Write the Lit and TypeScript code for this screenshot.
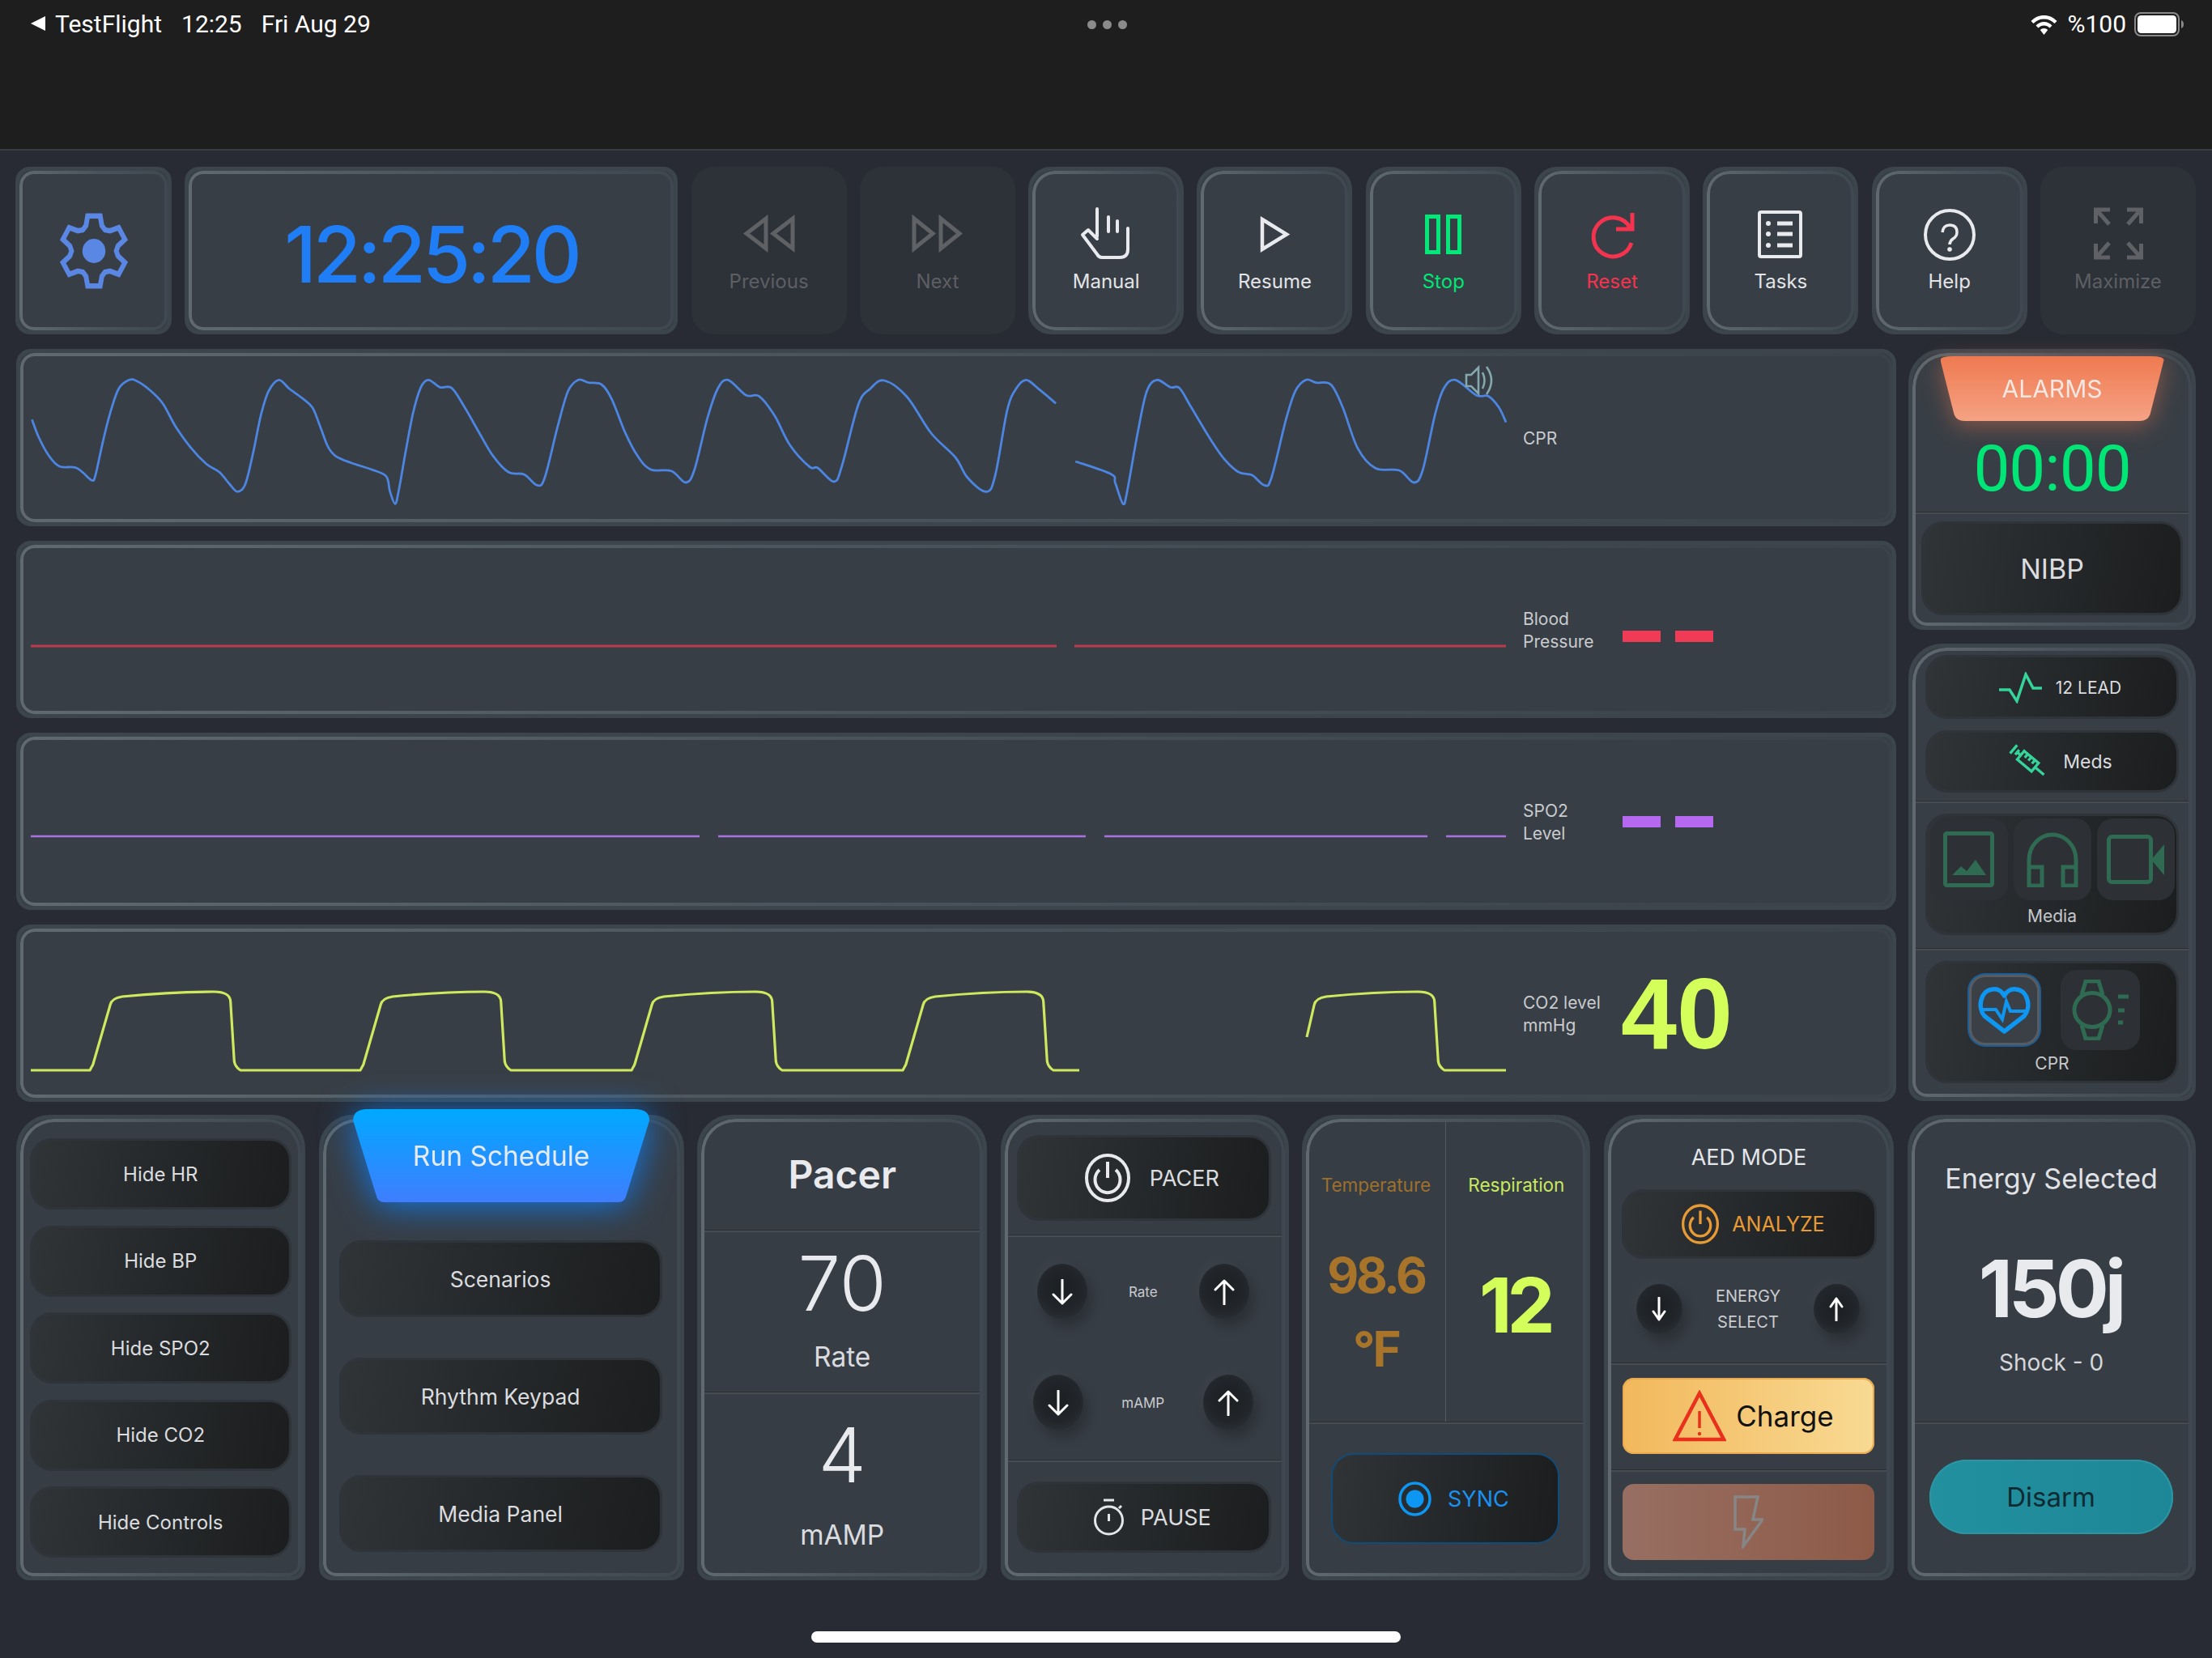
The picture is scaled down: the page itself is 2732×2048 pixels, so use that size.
import { LitElement, html, css, svg } from "lit";
import { customElement } from "lit/decorators.js";

type P = [number, number];

function smooth(pts: P[]): string {
  let d = `M${pts[0][0].toFixed(1)} ${pts[0][1].toFixed(1)}`;
  for (let i = 0; i < pts.length - 1; i++) {
    const p0 = pts[Math.max(0, i - 1)];
    const p1 = pts[i];
    const p2 = pts[i + 1];
    const p3 = pts[Math.min(pts.length - 1, i + 2)];
    const c1: P = [p1[0] + (p2[0] - p0[0]) / 6, p1[1] + (p2[1] - p0[1]) / 6];
    const c2: P = [p2[0] - (p3[0] - p1[0]) / 6, p2[1] - (p3[1] - p1[1]) / 6];
    d += ` C${c1[0].toFixed(1)} ${c1[1].toFixed(1)} ${c2[0].toFixed(1)} ${c2[1].toFixed(1)} ${p2[0].toFixed(1)} ${p2[1].toFixed(1)}`;
  }
  return d;
}

const zy = (v: number) => 420 + v / 3;
const seg1a: number[][] = [[62,295],[75,360],[95,430],[115,468],[145,472],[160,490],[178,520],[185,500],[200,370],[215,260],[230,180],[250,148],[265,152],[290,185],[315,235],[340,320],[370,400],[400,460],[425,490],[445,535],[460,562],[475,535],[490,420],[505,280],[520,190],[540,148],[560,180],[585,215],[605,250],[620,320],[635,395],[650,430],[680,455],[720,480],[748,505],[755,560],[765,607],[772,560],[785,420],[800,270],[815,175],[830,148],[852,175],[875,178],[900,250],[930,350],[955,430],[985,490],[1015,498],[1040,538],[1055,510],[1080,320],[1100,190],[1120,148],[1140,158],[1165,165],[1185,220],[1210,340],[1235,430],[1260,480],[1300,485],[1328,528],[1345,480],[1370,290],[1390,180],[1410,148],[1445,205],[1470,208],[1500,280],[1530,390],[1568,470]];
const seg1mid: P[] = [[1010,578],[1030,595],[1040,575],[1060,500],[1075,480],[1092,470],[1120,490],[1150,535],[1180,565],[1195,590]];
const seg1b: number[][] = [[25,562],[40,500],[60,260],[75,180],[92,148],[115,185],[142,235]];
const seg2: number[][] = [[175,450],[235,497],[242,530],[255,607],[262,560],[280,340],[295,190],[312,148],[335,175],[350,178],[370,250],[400,360],[425,440],[450,490],[472,500],[493,538],[505,510],[530,290],[545,190],[563,148],[580,158],[605,165],[625,250],[650,400],[680,475],[720,483],[745,528],[760,480],[780,280],[795,180],[815,148],[850,205],[870,208],[888,250],[900,305]];
const pulseA: P[] = [
  ...seg1a.map((p) => [p[0] / 1.568, zy(p[1])] as P),
  ...seg1mid,
  ...seg1b.map((p) => [1200 + p[0] / 1.3635, zy(p[1])] as P),
];
const pulseB: P[] = seg2.map((p) => [1200 + p[0] / 1.3635, zy(p[1])] as P);

const co2Beat = (x: number) =>
  `L${x} 1321 L${x + 3.8} 1314 L${x + 25.2} 1240 Q${x + 27} 1232 ${x + 40} 1230 Q${x + 100} 1224 ${x + 153} 1224 Q${x + 173} 1224 ${x + 173.7} 1236 L${x + 178.3} 1310 Q${x + 179.5} 1317 ${x + 186} 1321`;
const co2A = `M38 1321 ${co2Beat(111)} ${co2Beat(445)} ${co2Beat(780)} ${co2Beat(1115)} H1333`;
const co2B = `M1614 1280 L1623.2 1240 Q1625 1232 1638 1230 Q1698 1224 1751 1224 Q1771 1224 1771.7 1236 L1776.3 1310 Q1777.5 1317 1784 1321 H1860`;

function gearPath(cx: number, cy: number): string {
  const pt = (r: number, deg: number) => {
    const a = (deg * Math.PI) / 180;
    return `${(cx + r * Math.cos(a)).toFixed(1)} ${(cy + r * Math.sin(a)).toFixed(1)}`;
  };
  const out: string[] = [];
  for (let i = 0; i < 6; i++) {
    const a = i * 60 - 90;
    out.push(pt(33, a - 19), pt(44, a - 11), pt(44, a + 11), pt(33, a + 19), pt(30, a + 30));
  }
  return "M" + out.join(" L") + " Z";
}

const chart = (y0: number, body: unknown) => html`<svg class="trace" viewBox="25 ${y0} 1845 209">${body}</svg>`;

const arrowDown = html`<svg class="arr" viewBox="0 0 26 32"><path d="M13 1V30M2 19L13 30L24 19"/></svg>`;
const arrowUp = html`<svg class="arr" viewBox="0 0 26 32"><path d="M13 31V2M2 13L13 2L24 13"/></svg>`;
const arrowDownS = html`<svg class="arr small" viewBox="0 0 18 30"><path d="M9 1V28M2 18L9 28L16 18"/></svg>`;
const arrowUpS = html`<svg class="arr small" viewBox="0 0 18 30"><path d="M9 29V2M2 12L9 2L16 12"/></svg>`;

const ico = (body: unknown) => html`<svg class="ti" viewBox="0 0 70 70">${body}</svg>`;

const icons = {
  prev: ico(svg`<path class="s5" d="M7 32.5L31 14V51ZM40 32.5L64 14V51Z"/>`),
  next: ico(svg`<path class="s5" d="M29 32.5L6 14V51ZM62 32.5L39 14V51Z"/>`),
  manual: ico(svg`<path class="s4r" d="M24 2V36M38 12V30M49 17V30M62 26V52Q62 62 52 62H30Q26 62 24 58L6 34L13 28L24 39"/>`),
  resume: ico(svg`<path class="s45" d="M20 15L50 33.5L20 52Z"/>`),
  stop: ico(svg`<path class="s5" d="M14.5 11.5h14v44h-14zM40.5 11.5h14v44h-14z"/>`),
  reset: ico(svg`<path class="s5" d="M57 25A24 24 0 1 0 59 44M60 7V27H40"/>`),
  tasks: ico(svg`<rect class="s4" x="9" y="6" width="51" height="55" rx="2"/><g class="fillc"><circle cx="20" cy="20" r="3"/><circle cx="20" cy="33" r="3"/><circle cx="20" cy="47" r="3"/><rect x="31" y="17.5" width="19" height="5"/><rect x="31" y="30.5" width="19" height="5"/><rect x="31" y="44.5" width="19" height="5"/></g>`),
  help: ico(svg`<circle class="s4" cx="35" cy="34" r="30"/><path class="s35" d="M26 31Q27 22 35 22Q44 22 44 31Q44 36 39 39Q35 42 35 46"/><circle class="fillc" cx="35" cy="52" r="2.8"/>`),
  maximize: ico(svg`<path class="s5" d="M7.5 20V3H25M8 3L24 21M63.5 20V3H46M63 3L47 21M7.5 45V62H25M8 62L24 44M63.5 45V62H46M63 62L47 44"/>`),
};

const toolButtons = [
  { label: "Previous", icon: icons.prev, cls: "off" },
  { label: "Next", icon: icons.next, cls: "off" },
  { label: "Manual", icon: icons.manual, cls: "" },
  { label: "Resume", icon: icons.resume, cls: "" },
  { label: "Stop", icon: icons.stop, cls: "green" },
  { label: "Reset", icon: icons.reset, cls: "red" },
  { label: "Tasks", icon: icons.tasks, cls: "" },
  { label: "Help", icon: icons.help, cls: "" },
  { label: "Maximize", icon: icons.maximize, cls: "off" },
];

const power = (cls: string) => html`<svg class="power ${cls}" viewBox="0 0 56 60"><ellipse cx="28" cy="30" rx="26" ry="28"/><path d="M18 20A15.5 16 0 1 0 38 20M28 10V30"/></svg>`;

@customElement("app-root")
export class AppRoot extends LitElement {
  static styles = css`
    :host { display: block; width: 2732px; height: 2048px; background: #282b33; overflow: hidden; color: #e4e6e9; font-family: "Inter", "Noto Sans", sans-serif; }
    * { box-sizing: border-box; }
    svg { display: block; flex: none; fill: none; }

    .status { height: 186px; background: #1e1e1e; border-bottom: 2px solid #3b3e41; display: grid; grid-template-columns: 1fr auto 1fr; align-items: start; padding: 12px 35px 0 38px; font: 400 30px/36px "Roboto", sans-serif; color: #fff; }
    .status .l, .status .r { display: flex; align-items: flex-start; }
    .status .r { justify-content: flex-end; }
    .status .back { width: 18px; height: 18px; margin: 8px 12px 0 0; background: #fff; clip-path: polygon(0 50%, 100% 0, 100% 100%); }
    .status .t2 { margin-left: 24px; }
    .status .dots { display: flex; gap: 8px; margin-top: 13px; }
    .status .dots i { width: 11px; height: 11px; border-radius: 50%; background: #8b8b8b; }
    .status .wifi { width: 33px; height: 27px; margin: 5px 12px 0 0; }
    .status .batt { width: 61px; height: 30px; margin: 3px 0 0 10px; }

    .card { position: relative; border: 5px solid #3c454c; background: #383e45; border-radius: 18px; display: flex; flex-direction: column; }
    .card::before { content: ""; position: absolute; inset: 0; border-radius: inherit; border: 4px solid transparent; background: linear-gradient(90deg, #5f696f, #4a535b 55%, #3f4850) border-box; -webkit-mask: linear-gradient(#000 0 0) padding-box, linear-gradient(#000 0 0); -webkit-mask-composite: xor; mask-composite: exclude; pointer-events: none; }

    .toolbar { display: flex; gap: 16.3px; margin-top: 20px; padding-left: 19px; height: 207px; }
    .gear { width: 193px; align-items: center; justify-content: center; }
    .gear svg { width: 92px; height: 100px; }
    .gear path { stroke: #5a86e4; stroke-width: 6.5; }
    .gear ellipse { fill: #5a86e4; }
    .clock { width: 609px; align-items: center; justify-content: center; font: 500 96px/1 "Inter", sans-serif; letter-spacing: -4.2px; color: #1f7df5; padding-top: 8px; }
    .tool { width: 192px; border-radius: 28px; align-items: center; padding-top: 45px; font-size: 24px; line-height: 30px; color: #e2e4e7; }
    .tool .ti { width: 70px; height: 70px; margin-bottom: 7px; --c: #e8eaed; }
    .tool.off { border-color: transparent; background: #2d3138; background-clip: border-box; color: #5d5f63; }
    .tool.off::before { display: none; }
    .tool.off .ti { --c: #5f6164; }
    .tool.green { color: #00e676; } .tool.green .ti { --c: #00e878; }
    .tool.red { color: #f5334f; } .tool.red .ti { --c: #f5334f; }
    .s5, .s4, .s4r, .s45, .s35 { stroke: var(--c); fill: none; }
    .s5 { stroke-width: 5; } .s4 { stroke-width: 4; } .s45 { stroke-width: 4.5; } .s35 { stroke-width: 3.5; }
    .s4r { stroke-width: 4; stroke-linejoin: round; stroke-linecap: round; }
    .fillc { fill: var(--c); }

    .main { display: flex; gap: 15px; margin-top: 18px; padding-left: 20px; height: 929px; }
    .charts { width: 2322px; display: flex; flex-direction: column; gap: 18px; }
    .chart { height: 219px; flex-direction: row; align-items: center; }
    .chart::before { background: linear-gradient(90deg, #5f696f, #4a535b 45%, #3f474f 80%, #3b4249) border-box; }
    .chart .trace { width: 1845px; height: 209px; }
    .trace path { fill: none; }
    .pulse { stroke: #4c85e2; stroke-width: 2.8; stroke-linejoin: round; }
    .bp { stroke: #bb3a4e; stroke-width: 3; }
    .spo { stroke: #a872e0; stroke-width: 2.5; }
    .co2 { stroke: #cfe95f; stroke-width: 3.2; stroke-linejoin: round; }
    .spk { stroke: #84a8ad; stroke-width: 2.6; }
    .lab { width: 122px; margin: 2px 0 0 11px; font-size: 21px; line-height: 28px; color: #c9cbce; }
    .dashes { display: flex; gap: 18px; margin-left: 1px; }
    .dashes i { width: 47px; height: 14px; }
    .dashes.r { margin-top: 16px; } .dashes.r i { background: #f03a56; }
    .dashes.p i { background: #b668f0; }
    .big40 { margin-left: -1px; font: 700 124px/1 "Liberation Sans", sans-serif; color: #d4ff5a; }

    .side { width: 355px; display: flex; flex-direction: column; gap: 17px; }
    .alarmcard { height: 347px; border-radius: 42px 42px 18px 18px; align-items: stretch; }
    .alarms { align-self: center; margin-top: 4px; filter: drop-shadow(0 6px 14px rgba(240,120,80,.45)); }
    .alarms div { width: 276px; height: 80px; display: flex; align-items: center; justify-content: center; background: linear-gradient(#ef7a50, #f5a284); clip-path: path("M16 0H260Q276 0 276 5L259 72Q256 80 246 80H30Q20 80 17 72L0 5Q0 0 16 0Z"); font-size: 30px; color: #f4e6e0; }
    .timer { height: 112px; padding-top: 6px; display: flex; align-items: center; justify-content: center; font: 400 80px/1 "Roboto", sans-serif; color: #00e676; letter-spacing: -1px; }
    .divider { height: 3px; flex: none; border-top: 1px solid #2d2e32; background: #454c54; }
    .dark { display: flex; align-items: center; justify-content: center; background: linear-gradient(100deg, #303437, #1b1d1e); border-radius: 24px; box-shadow: 0 0 0 3px #2f343a; color: #dadcdf; }
    .nibp { margin: 12px 14px 0; height: 110px; font-size: 34px; }

    .modes { height: 565px; border-radius: 42px 42px 18px 18px; padding-top: 12px; }
    .lead, .meds { margin: 0 19px; gap: 17px; font-size: 21px; }
    .lead { height: 73px; padding: 2px 0 0 20px; }
    .meds { height: 71px; margin-top: 20px; gap: 20px; padding-left: 20px; font-size: 23px; }
    .g3 { stroke: #35d49a; stroke-width: 3.5; }
    .lead svg { width: 53px; height: 39px; } .meds svg { width: 48px; height: 50px; }
    .modes .divider { margin-top: 13px; }
    .panel { margin: 16px 19px 0; flex-direction: column; justify-content: flex-start; font-size: 21px; color: #c5c8cb; }
    .panel.media { height: 144px; padding-top: 3px; }
    .tiles { display: flex; gap: 7px; align-items: center; }
    .tile { width: 96px; height: 101px; border-radius: 20px; background: #2d3135; display: flex; align-items: center; justify-content: center; }
    .dim { stroke: #2f6b52; stroke-width: 5; }
    .dimf { fill: #2f6b52; }
    .panel.media .lbl { margin-top: 5px; line-height: 30px; }
    .modes .d2 { margin-top: 19px; }
    .panel.cpr { height: 145px; align-items: stretch; }
    .panel.cpr .tiles { gap: 26px; padding: 5px 0 0 51px; height: 109px; }
    .heart { width: 87px; height: 87px; border-radius: 20px; background: #3b4047; border: 3px solid #575c62; box-shadow: 0 0 0 2px #1b5d94; display: flex; align-items: center; justify-content: center; }
    .watch { width: 98px; height: 99px; }
    .panel.cpr .lbl { text-align: center; line-height: 26px; margin-top: 2px; }

    .bottom { display: flex; gap: 16.6px; margin-top: 17px; padding-left: 20px; height: 575px; }
    .bcard { width: 357px; height: 575px; border-radius: 42px 42px 16px 16px; background: #373d45; }
    .hide { padding: 27px 15px 0 14.5px; gap: 25.5px; }
    .hide .dark { height: 82px; font-size: 24px; }
    .sched { width: 451px; z-index: 2; }
    .run { align-self: center; margin-top: -12px; filter: drop-shadow(0 4px 22px rgba(10,132,255,.85)); }
    .run div { width: 366px; height: 115px; display: flex; align-items: center; justify-content: center; background: linear-gradient(#00a9ff, #3f7dff); clip-path: path("M18 0H348Q366 0 366 14L337 108Q335 115 328 115H38Q31 115 29 108L0 14Q0 0 18 0Z"); font-size: 33.5px; color: #e6ebf0; }
    .sched .list { display: flex; flex-direction: column; gap: 56px; margin: 50px 25px 0 23px; }
    .sched .dark { height: 89px; font-size: 26.5px; }

    .pacer { width: 358px; align-items: stretch; text-align: center; }
    .pacer h2 { margin: 0; height: 137px; display: flex; align-items: center; justify-content: center; font-size: 48px; font-weight: 600; color: #e8eaed; }
    .stat { display: flex; flex-direction: column; align-items: center; font-weight: 400; }
    .stat b { font-size: 94px; line-height: 90px; font-weight: 300; color: #e8eaed; }
    .stat span { font-size: 33.5px; line-height: 40px; color: #d9dbde; }
    .stat.a { height: 197px; padding-top: 18px; } .stat.a span { margin-top: 26px; }
    .stat.b { padding-top: 30px; } .stat.b span { margin-top: 34px; }

    .ctrl { width: 356px; }
    .ctrl .big { margin: 23px 20px 0 18px; height: 100px; font-size: 27px; gap: 24px; padding-left: 20px; }
    .ctrl .divider.d1 { margin-top: 20px; }
    .adj { display: flex; align-items: center; justify-content: space-between; font-size: 17px; color: #c9cbce; height: 69px; }
    .adj.a { margin-top: 33px; padding: 0 44px 0 40px; }
    .adj.b { margin-top: 68px; padding: 0 39px 0 35px; }
    .round { width: 62px; height: 69px; border-radius: 50%; display: flex; align-items: center; justify-content: center; background: radial-gradient(circle at 50% 45%, #1b1f22 0, #22262a 55%, #32373d 100%); box-shadow: 6px 9px 14px rgba(0,0,0,.22), -5px -6px 12px rgba(255,255,255,.025); }
    .arr { width: 26px; height: 32px; }
    .arr path { stroke: #fff; stroke-width: 3; fill: none; stroke-linecap: round; stroke-linejoin: round; }
    .arr.small { width: 18px; height: 30px; }
    .ctrl .divider.d2 { margin-top: 36px; }
    .ctrl .pause { margin: 27px 20px 0 18px; height: 82px; font-size: 27px; gap: 20px; padding-left: 20px; }
    .power ellipse, .power path { stroke: currentColor; stroke-width: 4; }
    .power { width: 56px; height: 60px; color: #e8eaed; }
    .power.o { width: 46px; height: 50px; color: #e89a35; }
    .watchsm { width: 39px; height: 46px; stroke: #e4e6e9; stroke-width: 3; }

    .vitals { width: 356px; }
    .vitals .top { height: 374px; display: flex; }
    .vitals .col { width: 172px; display: flex; flex-direction: column; align-items: center; padding-top: 68px; }
    .vitals .col + .col { flex: 1; border-left: 1px solid #555a60; }
    .vitals .name { font-size: 22.5px; line-height: 28px; }
    .temp { color: #9d702b; } .resp { color: #c8e95f; }
    .temp b { font-size: 60px; line-height: 70px; font-weight: 700; margin-top: 62px; color: #a8742a; letter-spacing: -3.5px; }
    .temp b + b { margin-top: 21px; letter-spacing: -3px; }
    .resp b { font-size: 94px; line-height: 100px; font-weight: 700; margin-top: 84px; color: #d4ff5a; letter-spacing: -6px; padding-right: 4px; }
    .sync { margin: 38px 35px 0 33px; height: 108px; box-shadow: 0 0 0 2px #0f4c7c; gap: 20px; font-size: 27px; color: #1a90f0; border-radius: 26px; padding-left: 20px; }
    .sync svg { width: 41px; height: 43px; }

    .aed { width: 358px; align-items: stretch; }
    .aed .ttl { height: 58px; margin-top: 19px; text-align: center; font-size: 27px; line-height: 58px; color: #e4e6e9; }
    .analyze { margin: 13px 19px 0 20px; height: 80px; gap: 16px; font-size: 25px; color: #e89a35; padding-left: 10px; }
    .energy { display: flex; align-items: center; justify-content: space-between; padding: 0 37px 0 35px; margin-top: 34px; height: 62px; }
    .energy .round { width: 57px; height: 62px; }
    .energy .t { font-size: 20px; line-height: 32px; text-align: center; color: #c9cbce; }
    .aed .d1 { margin-top: 35px; }
    .charge { margin: 16px 19px 0 18px; height: 94px; border-radius: 14px; display: flex; align-items: center; justify-content: center; gap: 12px; background: linear-gradient(90deg, #f2b85c, #f8da93); box-shadow: inset 0 0 0 2px #eaa94e; font-size: 35px; color: #111; padding-left: 12px; }
    .aed .d2 { margin-top: 19px; }
    .shock { margin: 15px 19px 0 18px; height: 94px; border-radius: 14px; display: flex; align-items: center; justify-content: center; background: linear-gradient(90deg, #976f62, #8e5a48); }

    .energysel { width: 356px; align-items: stretch; text-align: center; }
    .energysel .top { height: 374px; display: flex; flex-direction: column; align-items: center; padding-top: 52px; }
    .energysel .h { font-size: 34px; line-height: 44px; color: #e0e2e5; }
    .energysel .v { font-size: 98px; line-height: 120px; font-weight: 700; margin-top: 54px; color: #e8eaed; letter-spacing: -5px; padding-right: 2px; }
    .energysel .s { font-size: 28px; line-height: 36px; margin-top: 13px; color: #d5d7da; }
    .disarm { margin: 44px 23px 0 22px; height: 92px; border-radius: 46px; display: flex; align-items: center; justify-content: center; background: linear-gradient(90deg, #22909f, #1d8797); box-shadow: inset 0 0 0 2px #2b95a3; font-size: 33px; color: #0f2a33; }

    .home { width: 728px; height: 14px; margin: 63px auto 0; background: #fff; border-radius: 7px; }
  `;

  render() {
    return html`
      <div class="status">
        <div class="l"><span class="back"></span><span>TestFlight</span><span class="t2">12:25</span><span class="t2">Fri Aug 29</span></div>
        <div class="dots"><i></i><i></i><i></i></div>
        <div class="r">
          <svg class="wifi" viewBox="0 0 33 27"><path fill="#fff" d="M16.5 2C10 2 5 4.5 0.5 9L3.5 12C7 8.5 11 6.5 16.5 6.5S26 8.5 29.5 12L32.5 9C28 4.5 23 2 16.5 2ZM16.5 10C12.5 10 9.5 11.5 6.5 14.5L9.5 17.5C11.5 15.5 13.5 14.5 16.5 14.5S21.5 15.5 23.5 17.5L26.5 14.5C23.5 11.5 20.5 10 16.5 10ZM16.5 18C14.5 18 13 18.8 11.8 20L16.5 26L21.2 20C20 18.8 18.5 18 16.5 18Z"/></svg>
          <span>%100</span>
          <svg class="batt" viewBox="0 0 61 30"><rect x="1" y="1" width="54" height="28" rx="7" stroke="#8a8a8a" stroke-width="2"/><rect x="4" y="4" width="48" height="22" rx="4.5" fill="#fff"/><path d="M58 10Q61 11 61 15T58 20Z" fill="#8a8a8a"/></svg>
        </div>
      </div>

      <div class="toolbar">
        <div class="card gear"><svg viewBox="0 0 100 100" preserveAspectRatio="none"><path d="${gearPath(50, 50)}"/><ellipse cx="50" cy="50" rx="15.5" ry="15"/></svg></div>
        <div class="card clock">12:25:20</div>
        ${toolButtons.map((b) => html`<div class="card tool ${b.cls}">${b.icon}<span>${b.label}</span></div>`)}
      </div>

      <div class="main">
        <div class="charts">
          <div class="card chart">
            ${chart(436, svg`<path class="pulse" d="${smooth(pulseA)}"/><path class="pulse" d="${smooth(pulseB)}"/><path class="spk" d="M1811 463H1817L1826 454V486L1817 477H1811ZM1831 460Q1836 470 1831 480M1836 453Q1848 470 1836 487"/>`)}
            <div class="lab">CPR</div>
          </div>
          <div class="card chart">
            ${chart(673, svg`<path class="bp" d="M38 798H1305M1327 798H1860"/>`)}
            <div class="lab">Blood<br />Pressure</div>
            <div class="dashes r"><i></i><i></i></div>
          </div>
          <div class="card chart">
            ${chart(910, svg`<path class="spo" d="M38 1033H864M887 1033H1341M1364 1033H1763M1786 1033H1860"/>`)}
            <div class="lab">SPO2<br />Level</div>
            <div class="dashes p"><i></i><i></i></div>
          </div>
          <div class="card chart">
            ${chart(1146, svg`<path class="co2" d="${co2A}"/><path class="co2" d="${co2B}"/>`)}
            <div class="lab">CO2 level<br />mmHg</div>
            <div class="big40">40</div>
          </div>
        </div>
        <div class="side">
          <div class="card alarmcard">
            <div class="alarms"><div>ALARMS</div></div>
            <div class="timer">00:00</div>
            <div class="divider"></div>
            <div class="dark nibp">NIBP</div>
          </div>
          <div class="card modes">
            <div class="dark lead"><svg viewBox="0 0 53 39"><path class="g3" d="M0 22H13L22 36L33 3L42 20H53"/></svg><span>12 LEAD</span></div>
            <div class="dark meds"><svg viewBox="0 0 50 50"><g class="g3" transform="rotate(40 25 25)"><path d="M1 17V31M7 20V28M7 24H13M13 17H37V31H13ZM37 24H52M19 17V23M25 17V23M31 17V23"/></g></svg><span>Meds</span></div>
            <div class="divider"></div>
            <div class="dark panel media">
              <div class="tiles">
                <div class="tile"><svg width="63" height="69" viewBox="0 0 63 69"><rect class="dim" x="2.5" y="2.5" width="58" height="64" rx="2"/><path class="dimf" d="M11 54L22 43L29 49L40 35L53 54Z"/></svg></div>
                <div class="tile"><svg width="64" height="69" viewBox="0 0 64 69"><path class="dim" d="M3 67V35A29 31 0 0 1 61 35V67M3 44H19V67H3ZM45 44H61V67H45Z"/></svg></div>
                <div class="tile"><svg width="71" height="61" viewBox="0 0 71 61"><rect class="dim" x="2.5" y="2.5" width="52" height="56" rx="4"/><path class="dimf" d="M55 31L71 12V50Z"/></svg></div>
              </div>
              <div class="lbl">Media</div>
            </div>
            <div class="divider d2"></div>
            <div class="dark panel cpr">
              <div class="tiles">
                <div class="heart"><svg width="65" height="61" viewBox="0 0 65 61"><path fill="none" stroke="#0d96f2" stroke-width="5.5" stroke-linejoin="round" d="M32.5 57L8 38C-1 28 3 6 18 5C25 4 30 8 32.5 13C35 8 40 4 47 5C62 6 66 28 57 38Z"/><path fill="none" stroke="#0d96f2" stroke-width="4" d="M5 30H22L30 42L35 20L40 32H60"/></svg></div>
                <div class="tile watch"><svg width="70" height="75" viewBox="0 0 70 75"><path class="dim" d="M12 19L17 2H33L38 19M12 56L17 73H33L38 56"/><ellipse class="dim" cx="25" cy="37.5" rx="22" ry="21"/><path class="dim" d="M57 21H70M57 38H65M57 53H63"/></svg></div>
              </div>
              <div class="lbl">CPR</div>
            </div>
          </div>
        </div>
      </div>

      <div class="bottom">
        <div class="card bcard hide">
          <div class="dark">Hide HR</div><div class="dark">Hide BP</div><div class="dark">Hide SPO2</div><div class="dark">Hide CO2</div><div class="dark">Hide Controls</div>
        </div>
        <div class="card bcard sched">
          <div class="run"><div>Run Schedule</div></div>
          <div class="list"><div class="dark">Scenarios</div><div class="dark">Rhythm Keypad</div><div class="dark">Media Panel</div></div>
        </div>
        <div class="card bcard pacer">
          <h2>Pacer</h2>
          <div class="divider"></div>
          <div class="stat a"><b>70</b><span>Rate</span></div>
          <div class="divider"></div>
          <div class="stat b"><b>4</b><span>mAMP</span></div>
        </div>
        <div class="card bcard ctrl">
          <div class="dark big">${power("")}<span>PACER</span></div>
          <div class="divider d1"></div>
          <div class="adj a"><div class="round">${arrowDown}</div><span>Rate</span><div class="round">${arrowUp}</div></div>
          <div class="adj b"><div class="round">${arrowDown}</div><span>mAMP</span><div class="round">${arrowUp}</div></div>
          <div class="divider d2"></div>
          <div class="dark pause"><svg class="watchsm" viewBox="0 0 39 46"><circle cx="19.5" cy="27" r="17"/><path d="M13 2H26M19.5 19V28M32 12L35 9"/></svg><span>PAUSE</span></div>
        </div>
        <div class="card bcard vitals">
          <div class="top">
            <div class="col temp"><span class="name">Temperature</span><b>98.6</b><b>°F</b></div>
            <div class="col resp"><span class="name">Respiration</span><b>12</b></div>
          </div>
          <div class="divider"></div>
          <div class="dark sync"><svg viewBox="0 0 41 43"><ellipse cx="20.5" cy="21.5" rx="18.5" ry="19.5" stroke="#0d96f2" stroke-width="3.5"/><circle cx="20.5" cy="21.5" r="11" fill="#0d96f2"/></svg><span>SYNC</span></div>
        </div>
        <div class="card bcard aed">
          <div class="ttl">AED MODE</div>
          <div class="dark analyze">${power("o")}<span>ANALYZE</span></div>
          <div class="energy"><div class="round">${arrowDownS}</div><div class="t">ENERGY<br />SELECT</div><div class="round">${arrowUpS}</div></div>
          <div class="divider d1"></div>
          <div class="charge"><svg width="66" height="64" viewBox="0 0 66 64"><path d="M33 4L63 61H3Z" stroke="#e8301c" stroke-width="4.5"/><path d="M33 26V47" stroke="#e8301c" stroke-width="3.5"/><circle cx="33" cy="54" r="2.2" fill="#e8301c"/></svg><span>Charge</span></div>
          <div class="divider d2"></div>
          <div class="shock"><svg width="37" height="66" viewBox="0 0 37 66"><path d="M2 2H30L24 30H36L12 63L14 42H2Z" stroke="#868686" stroke-width="3.5"/></svg></div>
        </div>
        <div class="card bcard energysel">
          <div class="top"><div class="h">Energy Selected</div><div class="v">150j</div><div class="s">Shock - 0</div></div>
          <div class="divider"></div>
          <div class="disarm">Disarm</div>
        </div>
      </div>
      <div class="home"></div>
    `;
  }
}
